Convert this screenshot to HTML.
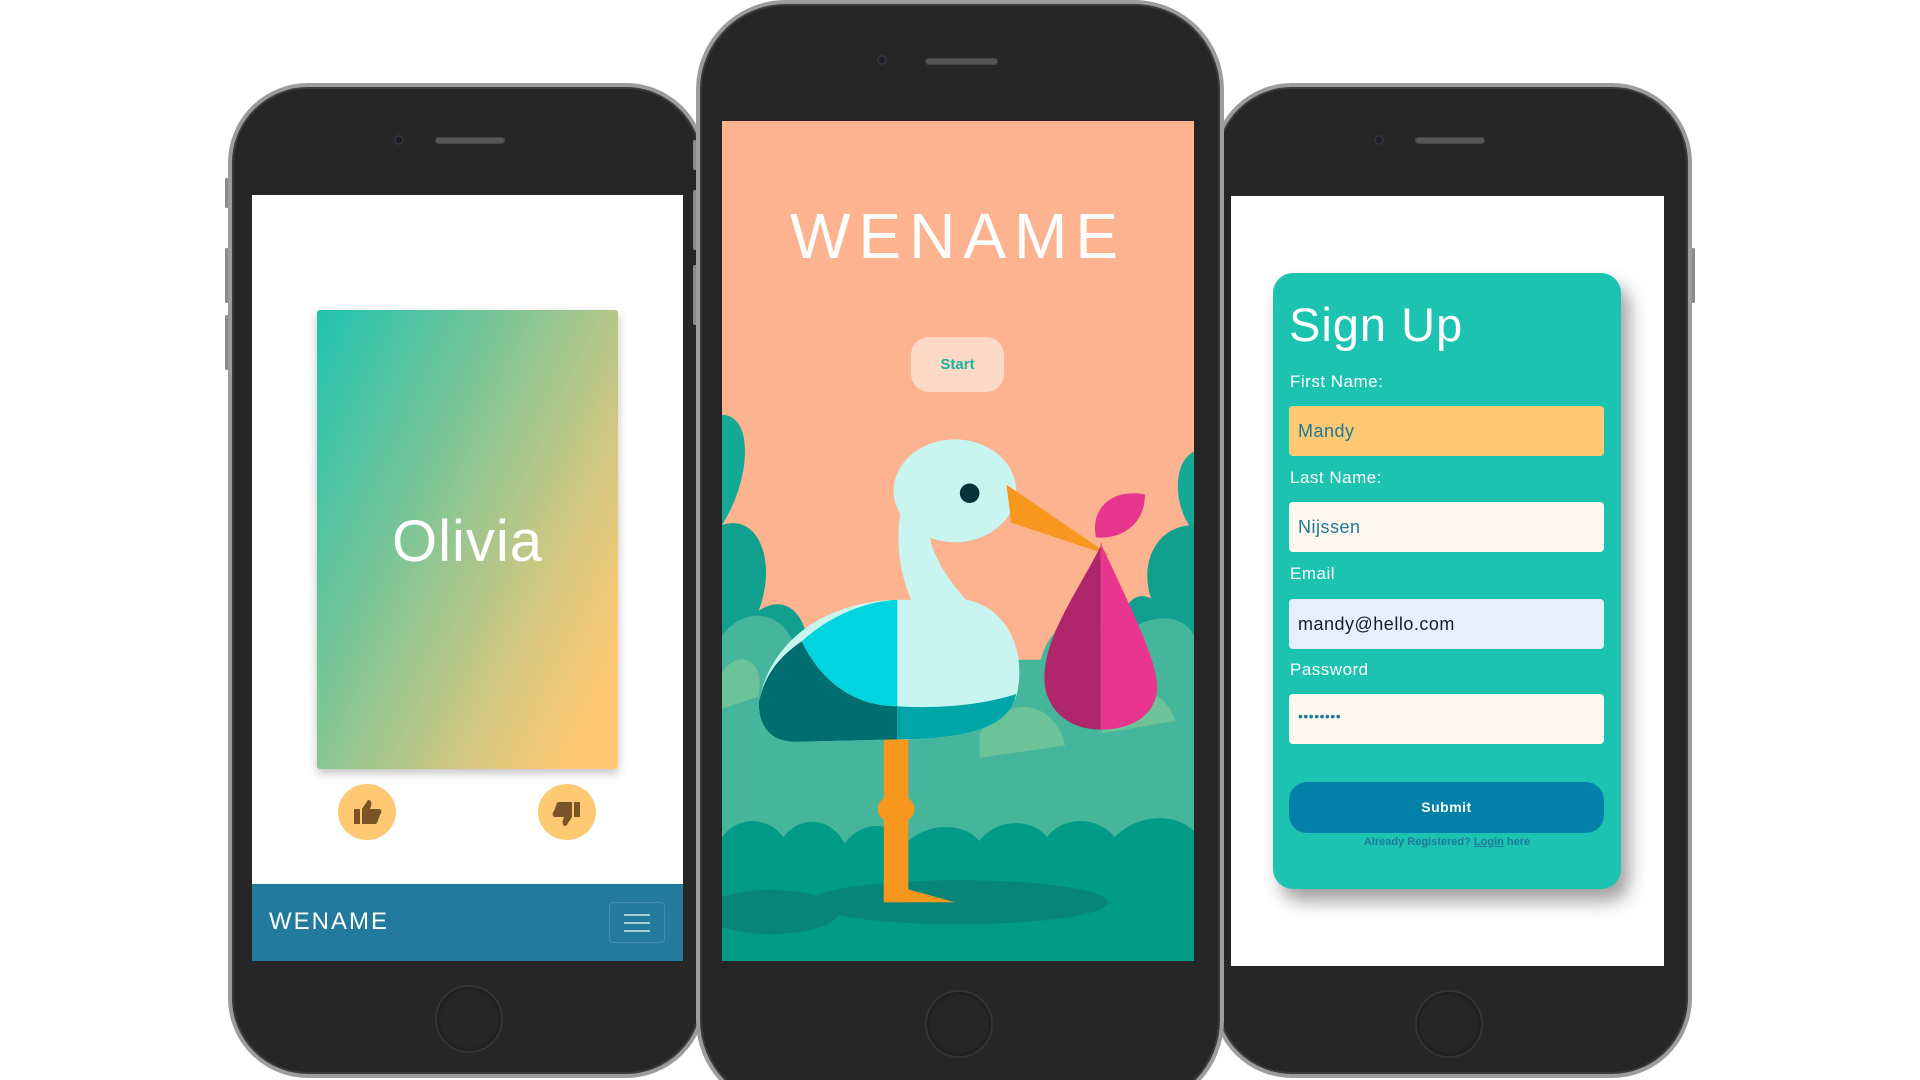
<!DOCTYPE html>
<html><head><meta charset="utf-8"><style>
*{margin:0;padding:0;box-sizing:border-box}
html,body{width:1920px;height:1080px;overflow:hidden}
body{background:#fff;position:relative;font-family:"Liberation Sans",sans-serif}
#wrap{position:absolute;left:0;top:0;width:1920px;height:1080px;overflow:hidden}
.ph{position:absolute;background:#262626;border:4px solid #9c9c9c;box-shadow:inset 0 0 0 2px #3a3a3a}
.scr{position:absolute;overflow:hidden}
.spk{position:absolute;height:7px;border-radius:4px;background:#555;border:1px solid #444}
.cam{position:absolute;width:10px;height:10px;border-radius:50%;background:#1a1a2a;border:2px solid #333}
.home{position:absolute;width:68px;height:68px;border-radius:50%;border:2px solid #333;box-shadow:inset 0 0 3px #111}
.btn{position:absolute;background:#8a8a8a;width:5px;border-radius:2px}
.abs{position:absolute}
.lbl{position:absolute;left:1290px;color:#fff;font-size:17px;letter-spacing:.5px}
.inp{position:absolute;left:1289px;width:315px;height:50px;border-radius:4px;padding-left:9px;line-height:50px;font-size:18px;color:#1d7a9a;letter-spacing:.5px}
</style></head><body><div id="wrap">

<!-- left phone -->
<div class="btn" style="left:225px;top:178px;height:30px"></div>
<div class="btn" style="left:225px;top:248px;height:55px"></div>
<div class="btn" style="left:225px;top:315px;height:55px"></div>
<div class="ph" style="left:228px;top:83px;width:478px;height:995px;border-radius:80px"></div>
<div class="cam" style="left:394px;top:135px"></div>
<div class="spk" style="left:435px;top:137px;width:70px"></div>
<div class="home" style="left:435px;top:985px"></div>
<div class="scr" style="left:252px;top:195px;width:431px;height:766px;background:#fff">
  <div class="abs" style="left:65px;top:115px;width:301px;height:459px;border-radius:3px;background:linear-gradient(115deg,#1fc3b0 0%,#7fc596 38%,#d4c880 70%,#ffc973 90%);box-shadow:0 4px 10px rgba(0,0,0,.25)">
    <div style="position:absolute;left:0;right:0;top:198px;text-align:center;color:#fff;font-size:58px;letter-spacing:1px">Olivia</div>
  </div>
  <div class="abs" style="left:86px;top:589px;width:58px;height:56px;border-radius:50%;background:#fec973"></div>
  <div class="abs" style="left:286px;top:589px;width:58px;height:56px;border-radius:50%;background:#fec973"></div>
  <svg class="abs" style="left:100px;top:601px" width="32" height="32" viewBox="0 0 32 32"><rect x="2" y="13" width="6" height="15" fill="#7a5326"/><path d="M10 13 L16 4 C19 4 20 6 19 10 L18 13 L27 13 C30 13 30 17 28 19 L25 27 C24 28 23 28 21 28 L10 28 Z" fill="#7a5326"/></svg>
  <svg class="abs" style="left:298px;top:603px" width="32" height="32" viewBox="0 0 32 32" transform="scale(-1,-1)"><rect x="2" y="13" width="6" height="15" fill="#7a5326"/><path d="M10 13 L16 4 C19 4 20 6 19 10 L18 13 L27 13 C30 13 30 17 28 19 L25 27 C24 28 23 28 21 28 L10 28 Z" fill="#7a5326"/></svg>
  <div class="abs" style="left:0;top:689px;width:431px;height:77px;background:#227b9c">
    <div class="abs" style="left:17px;top:24px;color:#fff;font-size:24px;letter-spacing:2px;font-weight:300">WENAME</div>
    <div class="abs" style="left:357px;top:18px;width:56px;height:41px;border:1px solid rgba(255,255,255,.15);border-radius:4px"></div>
    <div class="abs" style="left:372px;top:30px;width:26px;height:2px;background:#a9cfdc;box-shadow:0 8px 0 #a9cfdc,0 16px 0 #a9cfdc"></div>
  </div>
</div>

<!-- right phone -->
<div class="btn" style="left:1690px;top:248px;height:55px"></div>
<div class="ph" style="left:1212px;top:83px;width:480px;height:995px;border-radius:80px"></div>
<div class="cam" style="left:1374px;top:135px"></div>
<div class="spk" style="left:1415px;top:137px;width:70px"></div>
<div class="home" style="left:1415px;top:990px"></div>
<div class="scr" style="left:1231px;top:196px;width:433px;height:770px;background:#fff"></div>
<div class="abs" style="left:1273px;top:273px;width:348px;height:616px;border-radius:20px;background:#1dc3b1;box-shadow:8px 12px 18px rgba(0,0,0,.38)"></div>
<div class="abs" style="left:1289px;top:297px;color:#fff;font-size:47px;letter-spacing:1px">Sign Up</div>
<div class="lbl" style="top:372px">First Name:</div>
<div class="inp" style="top:406px;background:#fec973">Mandy</div>
<div class="lbl" style="top:468px">Last Name:</div>
<div class="inp" style="top:502px;background:#fcf8ee">Nijssen</div>
<div class="lbl" style="top:564px">Email</div>
<div class="inp" style="top:599px;background:#e6f0fd;color:#1a1a2a">mandy@hello.com</div>
<div class="lbl" style="top:660px">Password</div>
<div class="inp" style="top:694px;background:#fcf8ee;font-size:14px;line-height:44px">••••••••</div>
<div class="abs" style="left:1289px;top:782px;width:315px;height:51px;border-radius:18px;background:#0481a8;color:#fff;font-size:14px;font-weight:bold;text-align:center;line-height:51px;letter-spacing:.5px">Submit</div>
<div class="abs" style="left:1273px;width:348px;top:836px;text-align:center;font-size:11px;color:#1d7a9a;font-weight:bold">Already Registered? <u>Login</u> here</div>

<!-- center phone -->
<div class="btn" style="left:693px;top:140px;height:30px"></div>
<div class="btn" style="left:693px;top:190px;height:60px"></div>
<div class="btn" style="left:693px;top:265px;height:60px"></div>
<div class="ph" style="left:696px;top:0;width:528px;height:1110px;border-radius:90px"></div>
<div class="cam" style="left:877px;top:55px"></div>
<div class="spk" style="left:925px;top:58px;width:73px"></div>
<div class="home" style="left:925px;top:990px"></div>
<div class="scr" style="left:722px;top:121px;width:472px;height:840px;background:#fdb38f">
  <svg width="472" height="840" viewBox="0 0 385 686" preserveAspectRatio="none" style="position:absolute;left:0;top:0">
    <path d="M0,240 C25,240 25,290 0,330 Z" fill="#16a896"/>
    <path d="M0,330 C30,320 45,360 30,400 C60,380 80,420 65,460 L0,470 Z" fill="#12a08e"/>
    <path d="M385,270 C365,280 370,320 385,335 Z" fill="#16a896"/>
    <path d="M385,330 C355,330 340,360 350,390 C330,380 320,410 330,440 L385,450 Z" fill="#12a08e"/>
    <path d="M0,420 C20,395 50,400 60,430 C80,400 120,405 125,440 L260,440 C270,400 310,400 320,430 C340,400 375,400 385,420 L385,686 L0,686 Z" fill="#45b59b"/>
    <path d="M0,450 C15,430 35,440 30,470 L0,480 Z" fill="#6cc39a"/>
    <path d="M210,500 C230,470 270,470 280,510 L210,520 Z" fill="#6cc39a"/>
    <path d="M310,480 C330,460 360,460 370,490 L310,500 Z" fill="#6cc39a"/>
    <path d="M0,585 C15,565 40,570 50,585 C65,565 90,570 100,590 C115,570 140,572 150,590 C170,570 200,575 210,588 C225,568 255,570 265,585 C280,565 310,570 320,585 C340,565 370,565 385,580 L385,686 L0,686 Z" fill="#009b87"/>
    <ellipse cx="40" cy="646" rx="55" ry="18" fill="#08857a"/>
    <ellipse cx="193" cy="638" rx="122" ry="18" fill="#08857a"/>
    <rect x="132" y="500" width="20" height="138" fill="#f7971e"/>
    <ellipse cx="142" cy="562" rx="15" ry="12" fill="#f7971e"/>
    <path d="M132,622 L190,638 L132,638 Z" fill="#f7971e"/>
    <path d="M175,300 C150,350 200,390 225,420 L170,420 C150,390 135,350 150,300 Z" fill="#c8f5ef"/>
    <ellipse cx="190" cy="302" rx="50" ry="42" fill="#c8f5ef"/>
    <path d="M30,475 C40,420 90,392 143,391 L200,391 C238,400 248,440 240,470 C232,495 200,505 143,505 L60,507 C40,507 30,495 30,475 Z" fill="#c8f5ef"/>
    <path d="M65,425 C90,402 120,392 143,391 L143,478 C110,478 82,460 65,425 Z" fill="#00d4de"/>
    <path d="M30,475 C35,450 50,435 65,425 C82,460 110,478 143,478 L143,505 L60,507 C40,507 30,495 30,475 Z" fill="#006d70"/>
    <path d="M143,478 C170,480 210,478 240,468 C235,495 200,505 143,505 Z" fill="#00a5a8"/>
    <circle cx="202" cy="304" r="8" fill="#06333a"/>
    <path d="M232,297 L317,355 L236,328 Z" fill="#f7971e"/>
    <path d="M310,345 C290,385 263,420 263,455 C263,478 280,497 309,497 L309,345 Z" fill="#b0266a"/>
    <path d="M309,345 C330,390 355,440 355,462 C355,482 338,497 309,497 Z" fill="#e8368f"/>
    <path d="M305,340 C300,315 320,300 345,305 C345,330 325,342 305,340 Z" fill="#e8368f"/>
  </svg>
  <div class="abs" style="left:0;width:472px;top:78px;text-align:center;color:#fff;font-size:64px;font-weight:300;letter-spacing:8px">WENAME</div>
  <div class="abs" style="left:189px;top:216px;width:93px;height:55px;border-radius:18px;background:#fdd9c8;color:#1db5a0;font-size:15px;font-weight:bold;text-align:center;line-height:55px">Start</div>
</div>
</div></body></html>
